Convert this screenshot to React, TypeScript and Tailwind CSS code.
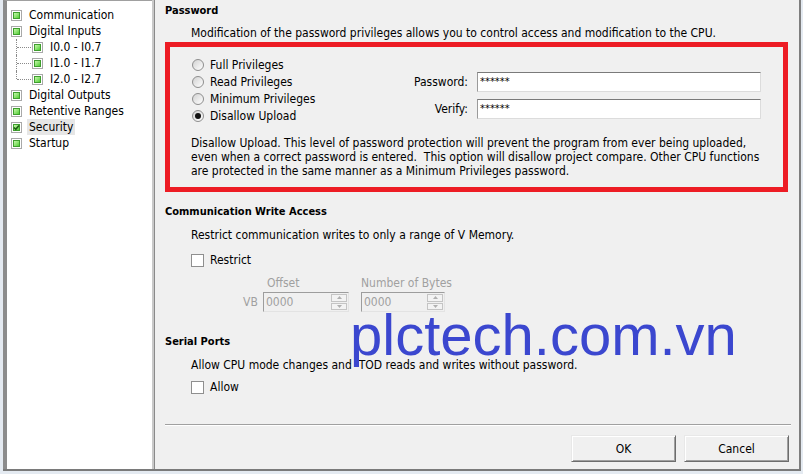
import React from "react";

const F = "font-['DejaVu_Sans_Condensed','DejaVu_Sans',sans-serif]";

function TreeBox({ checked }: { checked?: boolean }) {
  return (
    <span className="relative inline-block w-[11px] h-[11px] border border-[#a9a9a9] bg-white p-[1px] shrink-0">
      <span className="block w-full h-full border border-[#3f9e2e] bg-gradient-to-br from-[#c4f7a8] to-[#4ccf2c]" />
      {checked && (
        <svg className="absolute left-[1px] top-[1px]" width="7" height="7" viewBox="0 0 7 7">
          <path d="M1 3.5 L2.8 5.3 L6 1.6" stroke="#1d5e12" strokeWidth="1.6" fill="none" />
        </svg>
      )}
    </span>
  );
}

function TreeRow({ label, checked, selected }: { label: string; checked?: boolean; selected?: boolean }) {
  return (
    <div className="h-[16px] flex items-center pl-[4px]">
      <TreeBox checked={checked} />
      <span className={`ml-[5px] px-[2px] leading-[16px] ${selected ? "bg-[#e6e6e6]" : ""}`}>{label}</span>
    </div>
  );
}

function TreeChild({ label, last }: { label: string; last?: boolean }) {
  return (
    <div className="relative h-[16px] flex items-center pl-[25px]">
      <span className={`absolute left-[9px] top-0 border-l border-dotted border-[#8a8a8a] ${last ? "h-[8px]" : "h-[16px]"}`} />
      <span className="absolute left-[10px] top-[8px] w-[14px] border-t border-dotted border-[#8a8a8a]" />
      <TreeBox />
      <span className="ml-[7px] leading-[16px]">{label}</span>
    </div>
  );
}

function Radio({ label, checked }: { label: string; checked?: boolean }) {
  return (
    <div className="h-[17px] flex items-center">
      <span className="w-[12px] h-[12px] rounded-full border border-[#8e8e8e] bg-gradient-to-br from-[#d2d2d2] to-[#ffffff] flex items-center justify-center shrink-0">
        {checked && <span className="w-[6px] h-[6px] rounded-full bg-[#111]" />}
      </span>
      <span className="ml-[6px]">{label}</span>
    </div>
  );
}

function Check({ label }: { label: string }) {
  return (
    <div className="h-[16px] flex items-center">
      <span className="w-[13px] h-[13px] border border-[#8f8f8f] bg-white shrink-0" />
      <span className="ml-[6px]">{label}</span>
    </div>
  );
}

function Spin({ w }: { w: string }) {
  return (
    <div className={`${w} h-[20px] flex border border-t-[#9d9d9d] border-l-[#9d9d9d] border-r-[#e3e3e3] border-b-[#e3e3e3] bg-[#f0f0f0]`}>
      <span className="flex-1 pl-[2px] leading-[18px] text-[#a0a0a0]">0000</span>
      <div className="w-[17px] flex flex-col gap-[1px] py-[1px] pr-[1px]">
        <div className="flex-1 border border-[#c4c4c4] bg-[#f3f3f3] flex items-center justify-center">
          <svg width="5" height="3" viewBox="0 0 5 3"><path d="M0 3 L2.5 0 L5 3Z" fill="#b0b0b0" /></svg>
        </div>
        <div className="flex-1 border border-[#c4c4c4] bg-[#f3f3f3] flex items-center justify-center">
          <svg width="5" height="3" viewBox="0 0 5 3"><path d="M0 0 L2.5 3 L5 0Z" fill="#b0b0b0" /></svg>
        </div>
      </div>
    </div>
  );
}

function Btn({ label }: { label: string }) {
  return (
    <button className="w-[105px] h-[27px] border border-t-[#e8e8e8] border-l-[#e8e8e8] border-r-[#6d6d6d] border-b-[#6d6d6d] bg-[#f0f0f0] shadow-[inset_1px_1px_0_#ffffff,inset_-1px_-1px_0_#a0a0a0] text-black">
      {label}
    </button>
  );
}

export default function App() {
  return (
    <div className={`${F} relative w-[803px] h-[474px] overflow-hidden bg-[#e4eaf1] text-[12px] text-black`}>
      <div className="flex h-[471px] ml-[3px] mr-[2px] border-b-2 border-b-[#7a7a7a]">
        {/* Tree */}
        <div className="w-[149px] h-full bg-white border-l-4 border-l-[#8c8c8c] border-t border-t-[#a0a0a0] pt-[6px] text-[12px]">
          <TreeRow label="Communication" />
          <TreeRow label="Digital Inputs" />
          <TreeChild label="I0.0 - I0.7" />
          <TreeChild label="I1.0 - I1.7" />
          <TreeChild label="I2.0 - I2.7" last />
          <TreeRow label="Digital Outputs" />
          <TreeRow label="Retentive Ranges" />
          <TreeRow label="Security" checked selected />
          <TreeRow label="Startup" />
        </div>
        <div className="w-[3px] h-full bg-[#c9c9c9] border-r border-r-[#8a8a8a]" />
        {/* Main */}
        <div className="flex-1 h-full bg-[#f0f0f0] border-r-2 border-r-[#7e7e7e] pl-[10px] flex flex-col">
          <div className="mt-[3px] h-[15px] leading-[15px] font-bold text-[11px]">Password</div>
          <div className="mt-[8px] h-[15px] leading-[15px] pl-[26px] whitespace-nowrap">
            Modification of the password privileges allows you to control access and modification to the CPU.
          </div>
          <div className="mt-[1px] w-[623px] h-[150px] border-[5px] border-[#ed1c24] flex flex-col">
            <div className="flex items-start">
              <div className="pl-[22px] pt-[9px]">
                <Radio label="Full Privileges" />
                <Radio label="Read Privileges" />
                <Radio label="Minimum Privileges" />
                <Radio label="Disallow Upload" checked />
              </div>
              <div className="ml-auto mr-[22px] mt-[25px] grid grid-cols-[auto_284px] gap-x-[9px] gap-y-[7px] items-center">
                <span className="text-right">Password:</span>
                <div className="h-[20px] bg-white border border-t-[#7a7a7a] border-l-[#9a9a9a] border-r-[#dcdcdc] border-b-[#dcdcdc] pl-[2px] leading-[18px] text-[11px]">******</div>
                <span className="text-right">Verify:</span>
                <div className="h-[20px] bg-white border border-t-[#7a7a7a] border-l-[#9a9a9a] border-r-[#dcdcdc] border-b-[#dcdcdc] pl-[2px] leading-[18px] text-[11px]">******</div>
              </div>
            </div>
            <div className="mt-[12px] pl-[21px] leading-[14px] whitespace-nowrap">
              Disallow Upload. This level of password protection will prevent the program from ever being uploaded,
              <br />
              even when a correct password is entered.&nbsp; This option will disallow project compare. Other CPU functions
              <br />
              are protected in the same manner as a Minimum Privileges password.
            </div>
          </div>
          <div className="mt-[12px] h-[15px] leading-[15px] font-bold text-[11px]">Communication Write Access</div>
          <div className="mt-[9px] h-[15px] leading-[15px] pl-[26px]">Restrict communication writes to only a range of V Memory.</div>
          <div className="mt-[9px] pl-[26px]"><Check label="Restrict" /></div>
          <div className="mt-[8px] h-[15px] leading-[15px] flex text-[#a0a0a0]">
            <span className="ml-[102px] w-[94px]">Offset</span>
            <span>Number of Bytes</span>
          </div>
          <div className="mt-[1px] flex items-center">
            <span className="ml-[78px] w-[20px] text-[#a0a0a0]">VB</span>
            <Spin w="w-[86px]" />
            <span className="w-[12px]" />
            <Spin w="w-[84px]" />
          </div>
          <div className="mt-[22px] h-[15px] leading-[15px] font-bold text-[11px]">Serial Ports</div>
          <div className="mt-[9px] h-[15px] leading-[15px] pl-[26px]">Allow CPU mode changes and&nbsp; TOD reads and writes without password.</div>
          <div className="mt-[6px] pl-[26px]"><Check label="Allow" /></div>
          <div className="mt-[29px] mr-[8px] h-[2px] border-t border-t-[#a0a0a0] border-b border-b-white" />
          <div className="mt-[9px] flex justify-end gap-[8px] mr-[10px]">
            <Btn label="OK" />
            <Btn label="Cancel" />
          </div>
        </div>
      </div>
      <div className="absolute left-[350px] top-[306px] font-['Liberation_Sans',Arial,sans-serif] text-[58px] leading-none text-[#3b47cf] pointer-events-none">
        plctech.com.vn
      </div>
    </div>
  );
}
